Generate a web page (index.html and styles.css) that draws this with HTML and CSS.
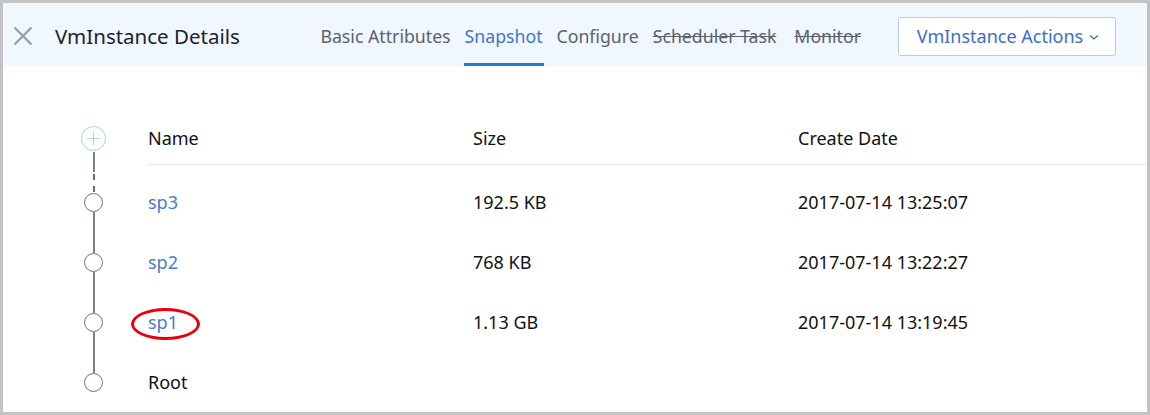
FILE: index.html
```html
<!DOCTYPE html>
<html>
<head>
<meta charset="utf-8">
<link rel="stylesheet" href="styles.css">
</head>
<body>
<div class="frame">
  <header class="topbar">
    <svg class="close" width="20" height="20" viewBox="0 0 20 20"><path d="M1.5 1.5 L18.5 18.5 M18.5 1.5 L1.5 18.5" stroke="#9a9fa8" stroke-width="2.4" fill="none"/></svg>
    <h1 class="title">VmInstance Details</h1>
    <nav class="tabs">
      <span class="tab">Basic Attributes</span>
      <span class="tab active">Snapshot</span>
      <span class="tab">Configure</span>
      <span class="tab strike">Scheduler Task</span>
      <span class="tab strike monitor">Monitor</span>
    </nav>
    <button class="actions">VmInstance Actions <svg class="chev" width="10" height="7" viewBox="0 0 10 7"><path d="M1 1.5 L5 5 L9 1.5" stroke="#3c6ec5" stroke-width="1.3" fill="none"/></svg></button>
  </header>
  <section class="tree">
    <div class="row head">
      <div class="mark"><span class="plus"></span></div>
      <div class="cols"><span>Name</span><span>Size</span><span>Create Date</span></div>
    </div>
    <div class="row first">
      <div class="mark"><span class="dot"></span></div>
      <div class="cols"><a class="name">sp3</a><span>192.5 KB</span><span>2017-07-14 13:25:07</span></div>
    </div>
    <div class="row">
      <div class="mark"><span class="dot"></span></div>
      <div class="cols"><a class="name">sp2</a><span>768 KB</span><span>2017-07-14 13:22:27</span></div>
    </div>
    <div class="row">
      <div class="mark"><span class="dot"></span></div>
      <div class="cols"><a class="name circled">sp1</a><span>1.13 GB</span><span>2017-07-14 13:19:45</span></div>
    </div>
    <div class="row last">
      <div class="mark"><span class="dot"></span></div>
      <div class="cols"><span>Root</span></div>
    </div>
  </section>
</div>
</body>
</html>
```
FILE: styles.css
```css
*, *::before, *::after { box-sizing: border-box; }
html, body { margin: 0; padding: 0; background: #fff; }
body { font-family: "Noto Sans", "Open Sans", sans-serif; color: #111; }
.frame {
  width: 1150px; height: 415px;
  border: 3px solid #c3c3c3;
  overflow: hidden;
  background: #fff;
}
.topbar {
  height: 63px;
  background: #f0f7fe;
  display: flex;
  align-items: stretch;
  padding-right: 31px;
}
.close { align-self: center; margin-left: 10px; margin-top: 3px; flex: none; }
.title {
  align-self: center;
  margin: 3px 0 0 22px;
  font-size: 20.5px;
  font-weight: 400;
  color: #1c2330;
}
.tabs { display: flex; margin-left: auto; gap: 12px; }
.tab {
  display: flex; align-items: center;
  padding: 5px 1px 0;
  font-size: 17.7px;
  color: #5b6270;
  border-bottom: 3px solid transparent;
}
.tab.active { color: #4674c4; border-bottom-color: #1a7fd8; }
.tab.strike { text-decoration: line-through; }
.tab.monitor { margin-left: 4px; }
.actions {
  align-self: center;
  margin-left: 36px;
  margin-top: 3px;
  width: 218px; height: 39px;
  background: #fff;
  border: 1px solid #bccbe2;
  border-radius: 3px;
  font-family: inherit;
  font-size: 18px;
  color: #3c6ec5;
  display: flex; align-items: center; justify-content: center; gap: 6px;
  padding: 0 0 0 2px;
}
.chev { margin-top: 2px; }

.tree { padding-top: 46px; }
.row { display: flex; height: 60px; }
.mark { width: 145px; flex: none; position: relative; }
.cols {
  flex: 1;
  display: grid;
  grid-template-columns: 325px 325px 1fr;
  align-items: center;
  font-size: 18px;
  height: 60px;
}
.head .cols { height: 53px; border-bottom: 1px solid #e1e9f1; }
.name { color: #4a7bc6; text-decoration: none; }
.circled { position: relative; justify-self: start; }
.circled::after {
  content: "";
  position: absolute;
  left: -17px; top: -2px;
  width: 69px; height: 32px;
  border: 3px solid #e8000e;
  border-radius: 50%;
}
.plus {
  position: absolute;
  left: 78px; top: 14px;
  width: 25px; height: 25px;
  border: 1.5px solid #a9d0f2;
  border-radius: 50%;
}
.plus::before, .plus::after {
  content: ""; position: absolute; background: #a9d0f2;
}
.plus::before { left: 5px; right: 5px; top: 10.5px; height: 1.5px; }
.plus::after { top: 5px; bottom: 5px; left: 10.5px; width: 1.5px; }
.head .mark::after {
  content: ""; position: absolute;
  left: 90px; top: 42px; bottom: 0; width: 1.5px;
  background: repeating-linear-gradient(to bottom, #6c6c6c 0 6px, transparent 6px 12px);
}
.dot {
  position: absolute;
  left: 81px; top: 21px;
  width: 19px; height: 19px;
  border: 1.5px solid #6e7580;
  border-radius: 50%;
  background: #fff;
}
.row .mark::before {
  content: ""; position: absolute;
  left: 90px; top: 0; height: 21px; width: 1.5px; background: #7a818a;
}
.row .mark::after {
  content: ""; position: absolute;
  left: 90px; top: 40px; bottom: 0; width: 1.5px; background: #7a818a;
}
.row.head .mark::before { display: none; }
.row.first .mark::before {
  background: repeating-linear-gradient(to bottom, transparent 0 2px, #6c6c6c 2px 8px, transparent 8px 12px);
}
.row.last .mark::after { display: none; }
```
